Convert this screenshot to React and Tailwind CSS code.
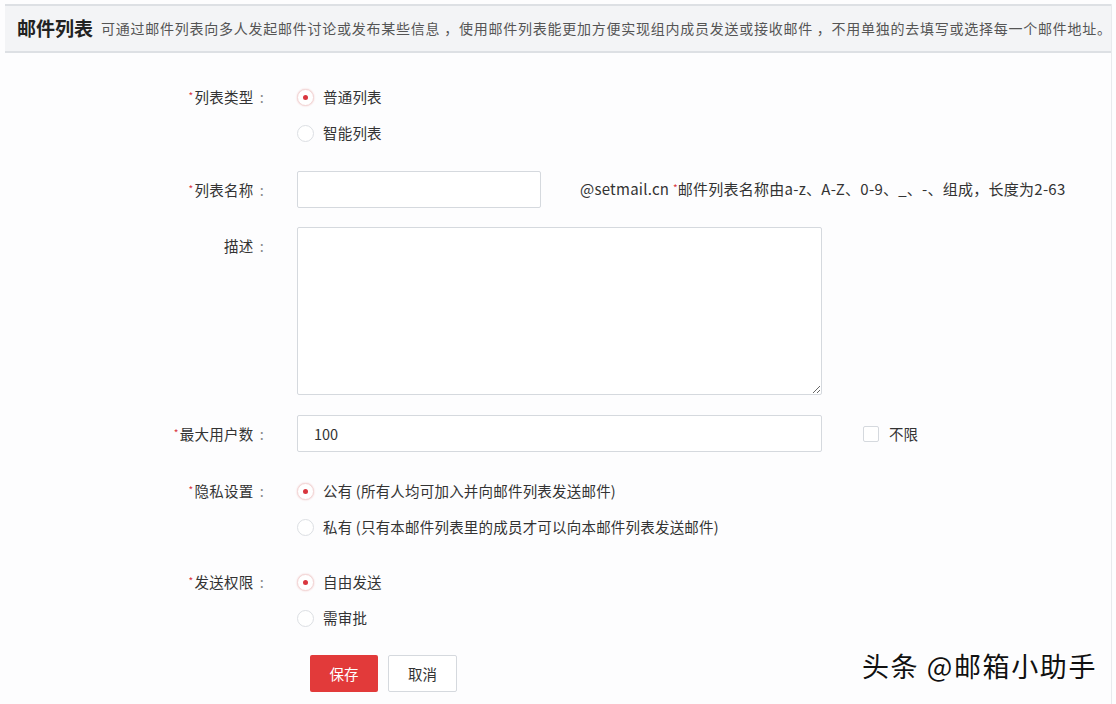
import React from "react";

const font = { fontFamily: '"Noto Sans CJK SC", "Noto Sans", sans-serif' };

function Radio({ checked, children }) {
  return (
    <label className="flex h-9 items-center gap-[9px] text-[14.5px] tracking-[0.2px] text-[#333]">
      <span
        className={`flex h-[17px] w-[17px] items-center justify-center rounded-full border bg-white ${
          checked ? "border-[#f3d6d6] shadow-[0_0_2px_#f0c8c8]" : "border-[#dcdfe3]"
        }`}
      >
        {checked && <span className="h-[5px] w-[5px] rounded-full bg-[#d9363e]" />}
      </span>
      <span>{children}</span>
    </label>
  );
}

function Label({ required, children, className = "" }) {
  return (
    <div className={`w-[264px] shrink-0 text-right text-[14.5px] tracking-[0.3px] text-[#333] ${className}`}>
      {required && <span className="relative -top-[3px] mr-[1px] text-[10px] text-[#d9363e]">*</span>}
      {children}
      <span className="ml-[6px] text-[#888]">:</span>
    </div>
  );
}

export default function App() {
  return (
    <div className="relative h-[704px] w-[1116px] overflow-hidden bg-[#fdfdfe]" style={font}>
      <div className="mr-[4px] ml-[5px] h-full border-r border-[#e8eaed]">
        {/* header */}
        <div className="mt-[4px] flex h-[49px] items-center overflow-hidden border-y-2 border-[#dde0e4] bg-[#f3f4f6] pl-[12px]">
          <span className="shrink-0 whitespace-nowrap text-[19px] font-bold text-[#222]">邮件列表</span>
          <span className="ml-[8px] shrink-0 whitespace-nowrap text-[14px] tracking-[0.75px] text-[#555]">
            可通过邮件列表向多人发起邮件讨论或发布某些信息 ，使用邮件列表能更加方便实现组内成员发送或接收邮件 ，不用单独的去填写或选择每一个邮件地址。
          </span>
        </div>

        {/* form */}
        <div className="flex flex-col pt-[26px]">
          <div className="-ml-[5px] flex">
            <Label required className="leading-9">列表类型</Label>
            <div className="ml-[33px] flex flex-col">
              <Radio checked>普通列表</Radio>
              <Radio>智能列表</Radio>
            </div>
          </div>

          <div className="-ml-[5px] mt-[20px] flex items-center">
            <Label required>列表名称</Label>
            <input className="ml-[33px] h-[37px] w-[244px] rounded-[2px] border border-[#d5d9de] bg-white outline-none" />
            <div className="ml-[39px] whitespace-nowrap text-[15px] tracking-[0.25px] text-[#333]">
              @setmail.cn <span className="relative -top-[3px] text-[10px] text-[#d9363e]">*</span>
              邮件列表名称由a-z、A-Z、0-9、_、-、组成，长度为2-63
            </div>
          </div>

          <div className="-ml-[5px] mt-[19px] flex">
            <Label className="pt-[8px]">描述</Label>
            <textarea className="ml-[33px] h-[168px] w-[525px] resize rounded-[2px] border border-[#d5d9de] bg-white outline-none" />
          </div>

          <div className="-ml-[5px] mt-[20px] flex items-center">
            <Label required>最大用户数</Label>
            <div className="ml-[33px] flex h-[37px] w-[525px] items-center rounded-[2px] border border-[#d5d9de] bg-white pl-[16px] text-[14.5px] text-[#333]">
              100
            </div>
            <span className="ml-[41px] h-[16px] w-[16px] rounded-[2px] border border-[#d5d9de] bg-white" />
            <span className="ml-[10px] text-[14.5px] text-[#333]">不限</span>
          </div>

          <div className="-ml-[5px] mt-[21px] flex">
            <Label required className="leading-9">隐私设置</Label>
            <div className="ml-[33px] flex flex-col">
              <Radio checked>公有 (所有人均可加入并向邮件列表发送邮件)</Radio>
              <Radio>私有 (只有本邮件列表里的成员才可以向本邮件列表发送邮件)</Radio>
            </div>
          </div>

          <div className="-ml-[5px] mt-[19px] flex">
            <Label required className="leading-9">发送权限</Label>
            <div className="ml-[33px] flex flex-col">
              <Radio checked>自由发送</Radio>
              <Radio>需审批</Radio>
            </div>
          </div>

          <div className="-ml-[5px] mt-[19px] flex gap-[10px] pl-[310px]">
            <button className="h-[37px] w-[68px] rounded-[2px] bg-[#e23a3a] text-[14.5px] text-white">保存</button>
            <button className="h-[37px] w-[69px] rounded-[2px] border border-[#d5d9de] bg-white text-[14.5px] text-[#333]">
              取消
            </button>
          </div>
        </div>
      </div>

      {/* watermark */}
      <div className="absolute top-[646px] left-[862px] whitespace-nowrap text-[27px] tracking-[1.6px] text-[#111] [text-shadow:1px_1px_1px_#fff,-1px_-1px_1px_#fff]">
        头条 @邮箱小助手
      </div>
    </div>
  );
}
